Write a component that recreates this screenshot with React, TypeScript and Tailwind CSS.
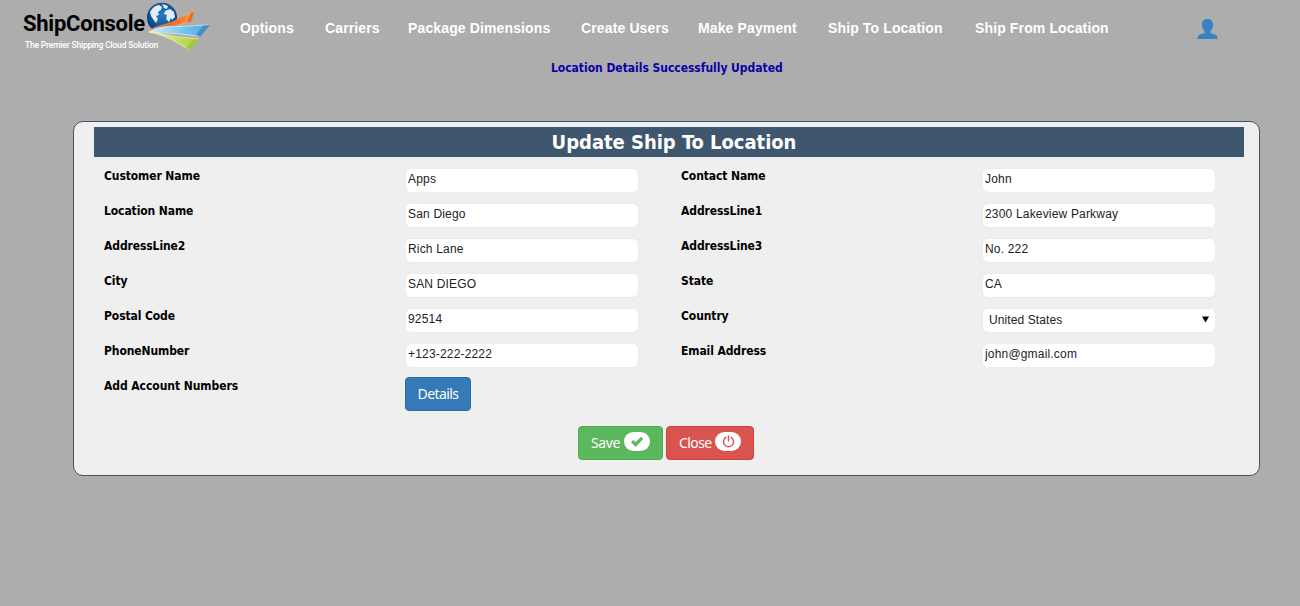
import React from "react";

const navItems = [
  { label: "Options", width: "w-[55px]" },
  { label: "Carriers", width: "w-[53px]" },
  { label: "Package Dimensions", width: "w-[143px]" },
  { label: "Create Users", width: "w-[87px]" },
  { label: "Make Payment", width: "w-[100px]" },
  { label: "Ship To Location", width: "w-[117px]" },
  { label: "Ship From Location", width: "w-[134px]" },
];

const leftFields = [
  ["Customer Name", "Apps"],
  ["Location Name", "San Diego"],
  ["AddressLine2", "Rich Lane"],
  ["City", "SAN DIEGO"],
  ["Postal Code", "92514"],
  ["PhoneNumber", "+123-222-2222"],
];

const rightFields = [
  ["Contact Name", "John"],
  ["AddressLine1", "2300 Lakeview Parkway"],
  ["AddressLine3", "No. 222"],
  ["State", "CA"],
  ["Country", "United States"],
  ["Email Address", "john@gmail.com"],
];

function Logo() {
  return (
    <div className="flex w-[190px] shrink-0">
      <div className="w-[122px] font-['Roboto','Liberation_Sans',sans-serif] whitespace-nowrap">
        <div className="mt-[10px] text-[22px] leading-[28px] font-bold tracking-[-0.25px] text-black">ShipConsole</div>
        <div className="ml-[2px] text-[8.5px] leading-[14px] font-medium tracking-[-0.19px] text-white">The Premier Shipping Cloud Solution</div>
      </div>
      <svg className="mt-px h-[52px] w-[66px]" viewBox="0 0 66 52">
        <defs>
          <radialGradient id="globe" cx="0.5" cy="0.4" r="0.6">
            <stop offset="0" stopColor="#2b7cc4" />
            <stop offset="0.65" stopColor="#11569d" />
            <stop offset="1" stopColor="#0a3263" />
          </radialGradient>
          <linearGradient id="orange" x1="0" x2="1">
            <stop offset="0" stopColor="#f58a45" />
            <stop offset="0.3" stopColor="#ed571d" />
            <stop offset="0.7" stopColor="#f47727" />
            <stop offset="1" stopColor="#f8a33d" />
          </linearGradient>
          <linearGradient id="blue" x1="0" x2="1">
            <stop offset="0" stopColor="#d2edf8" />
            <stop offset="0.6" stopColor="#72c4ec" />
            <stop offset="1" stopColor="#50a9dd" />
          </linearGradient>
          <linearGradient id="green" x1="0" x2="1">
            <stop offset="0" stopColor="#edf5c4" />
            <stop offset="0.6" stopColor="#c3df5e" />
            <stop offset="1" stopColor="#a9cf42" />
          </linearGradient>
        </defs>
        <circle cx="17" cy="16.7" r="15" fill="url(#globe)" />
        <path d="M5 11Q8 5 14 4L17 6L16 9L13 11L14 14L11 15L13 18L11 22L8 18L6 15ZM17 3L23 5L22 8L19 7ZM20 10L25 8L29 11L30 16L27 19L26 17L24 21L21 18L22 14L19 13Z" fill="#e2edf5" />
        <path d="M3 31C10 23 24 25 34 17L48 10.8L45 20.5C30 24 21 29 3 31Z" fill="url(#orange)" stroke="#f8c39a" strokeWidth="0.35" />
        <path d="M46 11.7L49 11L46 21L42 21.5Z" fill="#e86b21" />
        <path d="M4 31C14 25 23 25 35 25.5L63 24L54 35C37 33 25 32 4 31Z" fill="url(#blue)" stroke="#eef9fc" strokeWidth="0.6" />
        <path d="M58 24.7L65 24L55.5 35.5L51 34Z" fill="#418fc4" />
        <path d="M4 31C20 32 28 36 35 36L53 38L45 48C34 45 28 36 4 31Z" fill="url(#green)" stroke="#f0f7cd" strokeWidth="0.6" />
        <path d="M49 37.9L54 38.7L45.5 48.7L41 46.5Z" fill="#a1c83a" />
      </svg>
    </div>
  );
}

function Field({ label, value }: { label: string; value: string }) {
  return (
    <div className="flex h-[35px]">
      <label className="w-[302px] pt-[1px] text-[12px] leading-[16px] font-bold tracking-[-0.1px]">{label}</label>
      {label === "Country" ? (
        <div className="mt-[2px] flex h-[23px] w-[232px] items-center justify-between rounded-[5px] bg-white pr-[6px] pb-[2px] pl-[6px] font-['Liberation_Sans',sans-serif] text-[12px] tracking-[0.1px] text-[#222] shadow-[0_0_2px_#e4e4e4]">
          <span>{value}</span>
          <svg className="mb-[1px] h-[7px] w-[7px]" viewBox="0 0 7 7"><path d="M0 .5H7L3.5 6.5Z" fill="#000" /></svg>
        </div>
      ) : (
        <input
          className="mt-[2px] h-[23px] w-[232px] rounded-[5px] bg-white pb-[4px] pl-[2px] font-['Liberation_Sans',sans-serif] text-[12px] tracking-[0.18px] text-[#222] shadow-[0_0_2px_#e4e4e4] outline-none"
          defaultValue={value}
          aria-label={label}
        />
      )}
    </div>
  );
}

const buttonBase = "flex h-[34px] items-center rounded-[4px] border text-[14px] text-white font-['Noto_Sans',sans-serif] whitespace-nowrap pb-[2px]";

export default function App() {
  return (
    <div className="h-[606px] w-[1300px] overflow-hidden bg-[#adadad] font-['DejaVu_Sans_Condensed','DejaVu_Sans',sans-serif] text-black">
      <header className="flex h-[56px] pl-[23px]">
        <Logo />
        <nav className="ml-[27px] flex h-[56px] items-center gap-[30px] font-['Liberation_Sans',sans-serif] text-[14px] font-bold tracking-[0.13px] whitespace-nowrap text-white">
          {navItems.map((item) => (
            <a key={item.label} className={item.width}>{item.label}</a>
          ))}
        </nav>
        <svg className="mt-[19px] ml-[88px] h-[20px] w-[21px]" viewBox="0 0 21 20">
          <path d="M5 6C5 2 7 0 10.5 0S16 2 16 6C16 9 14.5 11 13.3 12.3V14L18 15.6Q20.5 16.5 20.5 20H.5Q.5 16.5 3 15.6L7.7 14V12.3C6.5 11 5 9 5 6Z" fill="#3782c4" />
        </svg>
      </header>
      <p className="ml-[551px] mt-[4px] h-[16px] text-[12px] leading-[16px] font-bold tracking-[-0.03px] whitespace-nowrap text-[#0d00a8]">
        Location Details Successfully Updated
      </p>
      <main className="mt-[45px] ml-[73px] h-[355px] w-[1187px] rounded-[10px] border border-[#3e556e] bg-[#efefef] pt-[5px] pl-[20px]">
        <h1 className="h-[30px] w-[1150px] bg-[#3e566e] pl-[10px] text-center text-[20px] leading-[30px] font-bold tracking-[-0.03px] text-white">Update Ship To Location</h1>
        <div className="mt-[10px] flex gap-[43px] pl-[10px]">
          {[leftFields, rightFields].map((fields, i) => (
            <section key={i} className="w-[534px]">
              {fields.map(([label, value]) => <Field key={label} label={label} value={value} />)}
            </section>
          ))}
        </div>
        <div className="flex h-[49px] pl-[10px]">
          <span className="w-[301px] pt-[1px] text-[12px] leading-[16px] font-bold tracking-[-0.06px]">Add Account Numbers</span>
          <button className={`${buttonBase} w-[66px] justify-center border-[#2e6da4] bg-[#337ab7] tracking-[-0.6px]`}>Details</button>
        </div>
        <div className="flex gap-[3px] pl-[484px]">
          <button className={`${buttonBase} w-[85px] gap-[4px] border-[#4cae4c] bg-[#5cb85c] pl-[12px] tracking-[-0.4px]`}>
            <span className="w-[29px]">Save</span>
            <span className="mb-[1px] flex h-[19px] w-[26px] items-center justify-center rounded-full bg-white">
              <svg className="mt-[1px] h-[12px] w-[14px]" viewBox="0 0 13 12"><path d="M.5 6L2.7 4L5 6.3L10.5 .8L12.7 3L5 11Z" fill="#5cb85c" /></svg>
            </span>
          </button>
          <button className={`${buttonBase} w-[88px] gap-[4px] border-[#d43f3a] bg-[#d9534f] pl-[12px] tracking-[-0.6px]`}>
            <span className="w-[32px]">Close</span>
            <span className="mb-[1px] flex h-[19px] w-[26px] items-center justify-center rounded-full bg-white">
              <svg className="h-[13px] w-[13px]" viewBox="0 0 13 13" fill="none" stroke="#d9534f" strokeWidth="1.4"><path d="M4.3 2.2A5 5 0 1 0 8.7 2.2M6.5 .5V6.5" /></svg>
            </span>
          </button>
        </div>
      </main>
    </div>
  );
}
